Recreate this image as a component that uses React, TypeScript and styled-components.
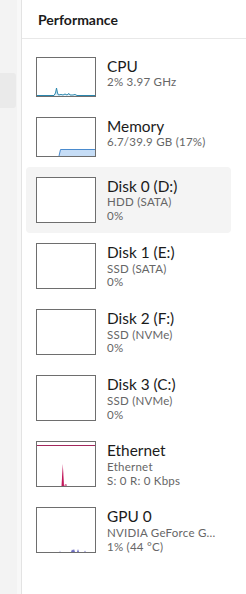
import React from 'react';
import styled, {createGlobalStyle} from 'styled-components';

const GlobalStyle = createGlobalStyle`
  html, body {
    margin: 0;
    padding: 0;
    background: #ffffff;
  }
  body {
    font-family: "Segoe UI", Lato, "Noto Sans", sans-serif;
    color: #1b1b1b;
  }
`;

const Shell = styled.div`
  display: flex;
  width: 246px;
  height: 594px;
  overflow: hidden;
`;

const NavRail = styled.div`
  width: 17px;
  background: #f3f3f3;
  padding-top: 73px;
  box-sizing: border-box;
`;

const NavItem = styled.div`
  width: 16px;
  height: 35px;
  background: #eaeaea;
  border-radius: 0 3px 3px 0;
`;

const Gutter = styled.div`
  width: 4px;
  background: #f8f8f8;
  border-right: 1px solid #e3e3e3;
`;

const Main = styled.div`
  flex: 1;
  display: flex;
  flex-direction: column;
  min-width: 0;
`;

const Header = styled.div`
  height: 38px;
  display: flex;
  align-items: center;
  padding-left: 16px;
  border-bottom: 1px solid #e8e8e8;
  font-size: 14px;
  font-weight: 700;
  color: #1b1b1b;
`;

const List = styled.div`
  display: flex;
  flex-direction: column;
  padding: 8px 15px 0 4px;
`;

const Row = styled.div<{$selected?: boolean}>`
  display: flex;
  gap: 11px;
  padding: 10px;
  border-radius: 4px;
  background: ${p => (p.$selected ? '#f4f4f4' : 'transparent')};
`;

const Graph = styled.div<{$tall?: boolean}>`
  flex: none;
  width: 60px;
  height: ${p => (p.$tall ? 46 : 40)}px;
  box-sizing: border-box;
  border: 1px solid #6e6e6e;
  background: #ffffff;
  display: flex;

  svg {
    display: block;
  }
`;

const Info = styled.div`
  display: flex;
  flex-direction: column;
  min-width: 0;
`;

const Title = styled.div`
  font-size: 15.4px;
  line-height: 18.48px;
  color: #1b1b1b;
  white-space: nowrap;
`;

const Sub = styled.div`
  font-size: 11.5px;
  line-height: 13.8px;
  letter-spacing: 0.25px;
  color: #666666;
  white-space: nowrap;
`;

const CpuChart = () => (
  <svg width="58" height="38" viewBox="0 0 58 38">
    <polyline
      points="0,37.5 17,37.5 18.5,35 19.5,30 20.5,35 21.5,37 24,36.5 26,37 28,36 30,37 32,35.5 33,37 36,37 38,36.5 40,37.5 58,37.5"
      fill="#d6eaf5"
      stroke="#2a86ad"
      strokeWidth="1"
    />
  </svg>
);

const MemoryChart = () => (
  <svg width="58" height="38" viewBox="0 0 58 38">
    <polygon points="22,38 23.5,31.5 58,31.5 58,38" fill="#c6ddf6" />
    <polyline points="22,38 23.5,31.5 58,31.5" fill="none" stroke="#4a8bce" strokeWidth="1" />
  </svg>
);

const EthernetChart = () => (
  <svg width="58" height="44" viewBox="0 0 58 44">
    <line x1="0" y1="3.5" x2="58" y2="3.5" stroke="#a3285c" strokeWidth="1" />
    <polygon points="24.5,44 25.8,22 27,44" fill="#c2185b" />
    <polygon points="27,44 28,42 29.5,42 30,44" fill="#d97aa0" />
  </svg>
);

const GpuChart = () => (
  <svg width="58" height="44" viewBox="0 0 58 44">
    <polygon points="22,44 23,42.5 24,44" fill="#c9c9ea" />
    <polygon points="34,44 35,41.5 36,42.5 37,41 38,44" fill="#6c6cc0" />
    <polygon points="40,44 41,41 42,44" fill="#6c6cc0" />
    <polygon points="47,44 48,42.5 49,44" fill="#9b9bd6" />
  </svg>
);

type Item = {
  title: string;
  lines: string[];
  chart?: React.ReactNode;
  selected?: boolean;
};

const items: Item[] = [
  {title: 'CPU', lines: ['2%  3.97 GHz'], chart: <CpuChart />},
  {title: 'Memory', lines: ['6.7/39.9 GB (17%)'], chart: <MemoryChart />},
  {title: 'Disk 0 (D:)', lines: ['HDD (SATA)', '0%'], selected: true},
  {title: 'Disk 1 (E:)', lines: ['SSD (SATA)', '0%']},
  {title: 'Disk 2 (F:)', lines: ['SSD (NVMe)', '0%']},
  {title: 'Disk 3 (C:)', lines: ['SSD (NVMe)', '0%']},
  {title: 'Ethernet', lines: ['Ethernet', 'S: 0 R: 0 Kbps'], chart: <EthernetChart />},
  {title: 'GPU 0', lines: ['NVIDIA GeForce G...', '1% (44 °C)'], chart: <GpuChart />},
];

export default function App() {
  return (
    <>
      <GlobalStyle />
      <Shell>
        <NavRail>
          <NavItem />
        </NavRail>
        <Gutter />
        <Main>
          <Header>Performance</Header>
          <List>
            {items.map(item => (
              <Row key={item.title} $selected={item.selected}>
                <Graph $tall={item.lines.length > 1}>{item.chart}</Graph>
                <Info>
                  <Title>{item.title}</Title>
                  {item.lines.map((line, i) => (
                    <Sub key={i}>{line}</Sub>
                  ))}
                </Info>
              </Row>
            ))}
          </List>
        </Main>
      </Shell>
    </>
  );
}
